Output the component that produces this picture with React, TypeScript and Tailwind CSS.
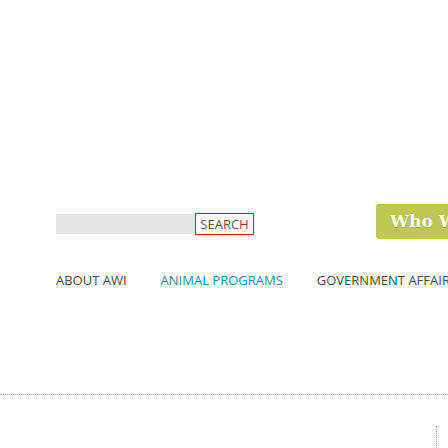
const NavLink = ({ label, active }: { label: string; active?: boolean }) => (
  <a
    href="#"
    className={
      active
        ? "text-[#2a8ea6] text-[13px] leading-none whitespace-nowrap font-stretch-[92%]"
        : "text-[#4a4a4a] text-[13px] leading-none whitespace-nowrap font-stretch-[92%]"
    }
  >
    {label}
  </a>
);

export default function App() {
  return (
    <div className="w-[448px] h-[448px] overflow-hidden bg-white relative font-['Open_Sans',sans-serif]">
      {/* search + cta */}
      <div className="flex items-start pt-[204px] pl-[56px]">
        <div className="w-[139px] h-[20px] mt-[10px] bg-[#e5e5e5] shrink-0" />
        <div className="w-[59px] h-[22px] mt-[9px] shrink-0 border-[1.5px] border-[#d71920] bg-white text-[#555] text-[13px] leading-none flex items-center justify-center font-stretch-[92%]">
          SEARCH
        </div>
        <div className="ml-[122px] shrink-0 w-[120px] h-[35px] rounded-[3px] bg-[#bdc853] flex items-center pl-[14px]">
          <span className="font-['DejaVu_Serif',serif] font-bold text-white text-[17px] whitespace-nowrap [text-shadow:0_1px_1px_rgba(0,0,0,0.15)]">
            Who We Are
          </span>
        </div>
      </div>

      {/* main nav */}
      <nav className="flex items-center pl-[56px] mt-[35px] gap-[34px]">
        <NavLink label="ABOUT AWI" />
        <NavLink label="ANIMAL PROGRAMS" active />
        <NavLink label="GOVERNMENT AFFAIRS" />
      </nav>

      <div className="mt-[107px] border-t border-dotted border-[#aaa]" />

      <div className="absolute left-[436px] top-[426px] h-[22px] border-l border-dotted border-[#aaa]" />
    </div>
  );
}
